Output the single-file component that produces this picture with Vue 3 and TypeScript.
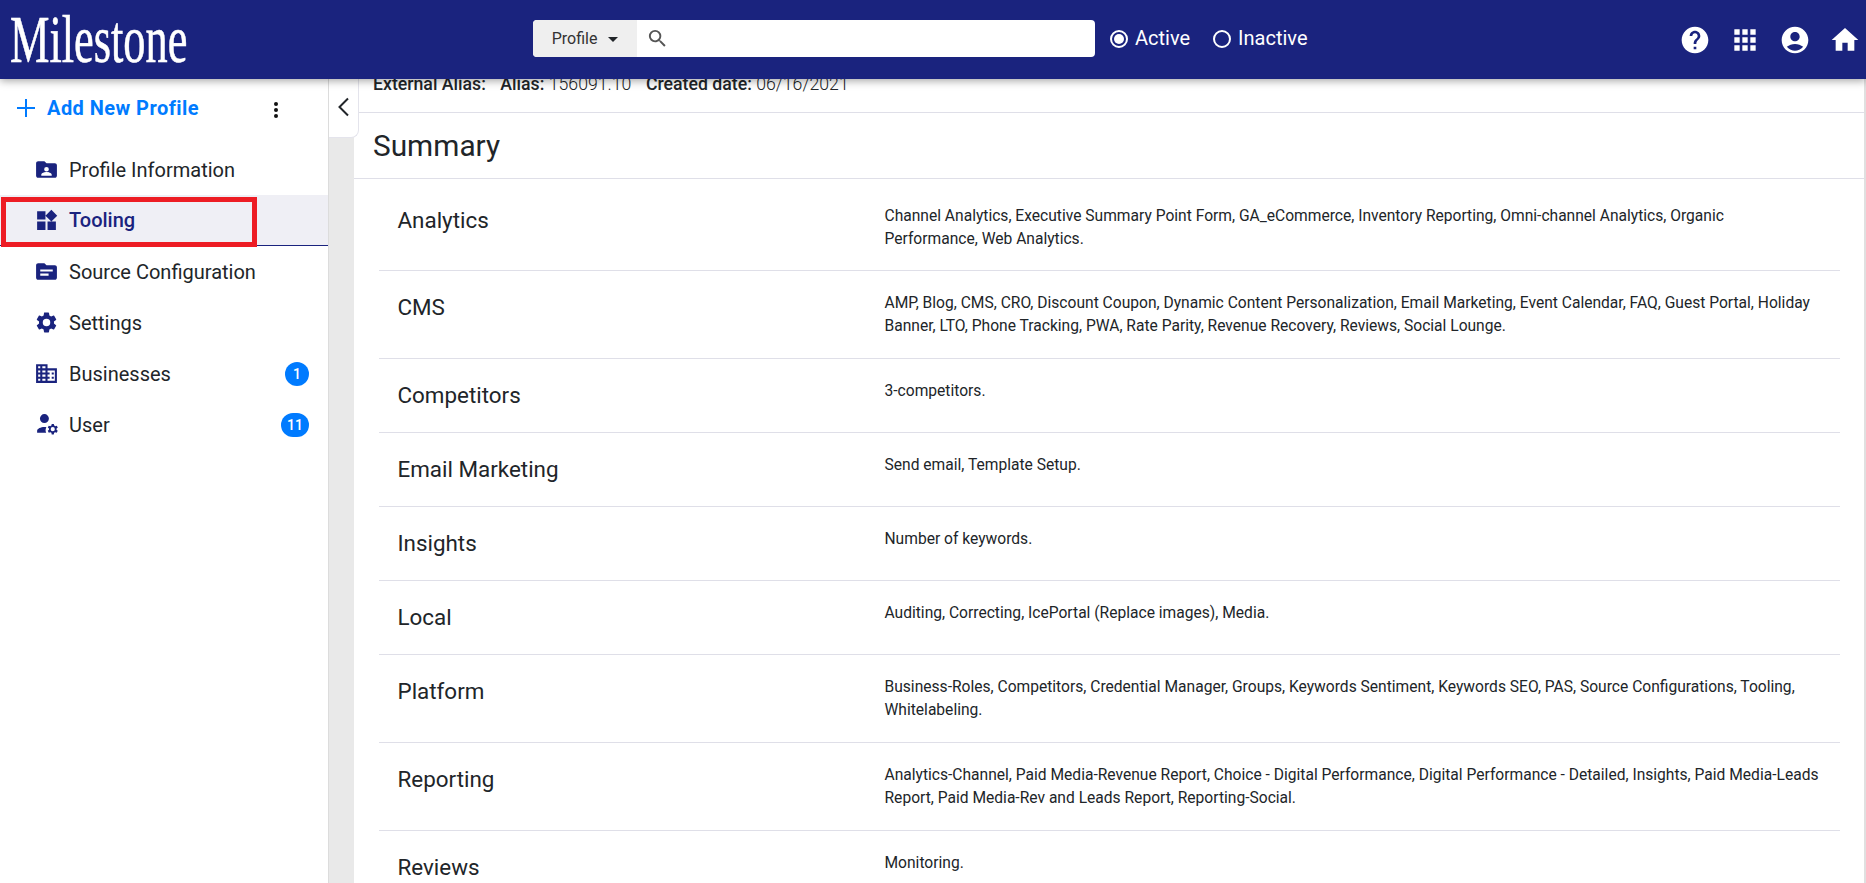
<template>
  <div class="page">
    <header class="topbar">
      <div class="logo">Milestone</div>
      <div class="search-area">
        <div class="search">
          <button class="search-type">Profile <span class="caret"></span></button>
          <svg class="search-icon" viewBox="0 0 24 24"><path d="M15.5 14h-.79l-.28-.27A6.47 6.47 0 0 0 16 9.5 6.5 6.5 0 1 0 9.5 16c1.61 0 3.09-.59 4.23-1.57l.27.28v.79l5 4.99L20.49 19l-4.99-5zm-6 0C7.01 14 5 11.99 5 9.5S7.01 5 9.5 5 14 7.01 14 9.5 11.99 14 9.5 14z"/></svg>
        </div>
        <label class="radio"><span class="radio-dot on"></span>Active</label>
        <label class="radio"><span class="radio-dot"></span>Inactive</label>
      </div>
      <div class="top-icons">
        <svg viewBox="0 0 24 24"><path d="M12 2C6.48 2 2 6.48 2 12s4.48 10 10 10 10-4.48 10-10S17.52 2 12 2zm1 17h-2v-2h2v2zm2.07-7.75l-.9.92C13.45 12.9 13 13.5 13 15h-2v-.5c0-1.1.45-2.1 1.17-2.83l1.24-1.26c.37-.36.59-.86.59-1.41 0-1.1-.9-2-2-2s-2 .9-2 2H8c0-2.21 1.79-4 4-4s4 1.79 4 4c0 .88-.36 1.68-.93 2.25z"/></svg>
        <svg viewBox="0 0 24 24"><path d="M4 8h4V4H4v4zm6 12h4v-4h-4v4zm-6 0h4v-4H4v4zm0-6h4v-4H4v4zm6 0h4v-4h-4v4zm6-10v4h4V4h-4zm-6 4h4V4h-4v4zm6 6h4v-4h-4v4zm0 6h4v-4h-4v4z"/></svg>
        <svg viewBox="0 0 24 24"><path d="M12 2C6.48 2 2 6.48 2 12s4.48 10 10 10 10-4.48 10-10S17.52 2 12 2zm0 4c1.93 0 3.5 1.57 3.5 3.5S13.93 13 12 13s-3.5-1.57-3.5-3.5S10.07 6 12 6zm0 14c-2.03 0-4.43-.82-6.14-2.88C7.55 15.8 9.68 15 12 15s4.45.8 6.14 2.12C16.43 19.18 14.03 20 12 20z"/></svg>
        <svg viewBox="0 0 24 24"><path d="M10 20v-6h4v6h5v-8h3L12 3 2 12h3v8z"/></svg>
      </div>
    </header>

    <div class="body">
      <aside class="sidebar">
        <div class="add-row">
          <svg class="add-plus" viewBox="0 0 18 18"><path d="M9 0v18M0 9h18" stroke="#007bff" stroke-width="2" /></svg>
          <span class="add-label">Add New Profile</span>
          <span class="kebab"><i></i><i></i><i></i></span>
        </div>
        <nav class="nav">
          <a v-for="item in navItems" :key="item.label" class="nav-item" :class="{ active: item.active }">
            <svg class="nav-icon" viewBox="0 0 24 24"><path :d="item.icon" /></svg>
            <span class="nav-label">{{ item.label }}</span>
            <span v-if="item.badge" class="badge">{{ item.badge }}</span>
          </a>
        </nav>
        <div class="highlight"></div>
      </aside>

      <div class="gutter">
        <button class="collapse">
          <svg viewBox="0 0 24 24"><path d="M16 3.5 7.5 12l8.5 8.5" fill="none" stroke="#212529" stroke-width="2" /></svg>
        </button>
      </div>

      <main class="content">
        <div class="meta">
          <b>External Alias:</b><b class="gap">Alias:</b> 156091.10<b class="gap">Created date:</b> 06/16/2021
        </div>
        <h2 class="title">Summary</h2>
        <div class="rows">
          <div v-for="row in rows" :key="row.name" class="row">
            <div class="row-name">{{ row.name }}</div>
            <div class="row-text">{{ row.text }}</div>
          </div>
        </div>
      </main>
    </div>
  </div>
</template>

<script setup lang="ts">
const navItems = [
  { label: "Profile Information", icon: "M20 6h-8l-2-2H4c-1.1 0-2 .9-2 2v12c0 1.1.9 2 2 2h16c1.1 0 2-.9 2-2V8c0-1.1-.9-2-2-2zm-8 3.5a2.25 2.25 0 1 1 0 4.5 2.25 2.25 0 0 1 0-4.5zM17 18H7v-1c0-1.67 3.33-2.5 5-2.5s5 .83 5 2.5v1z" },
  { label: "Tooling", active: true, icon: "M3 3h8v8H3V3zm0 10h8v8H3v-8zm10 0h8v8h-8v-8zM16.66 1.7 22.3 7.34l-5.64 5.66L11 7.34 16.66 1.7z" },
  { label: "Source Configuration", icon: "M20 6h-8l-2-2H4c-1.1 0-2 .9-2 2v12c0 1.1.9 2 2 2h16c1.1 0 2-.9 2-2V8c0-1.1-.9-2-2-2zM6 10h12v2H6v-2zm0 4h8v2H6v-2z" },
  { label: "Settings", icon: "M19.14 12.94c.04-.3.06-.61.06-.94 0-.32-.02-.64-.07-.94l2.03-1.58a.49.49 0 0 0 .12-.61l-1.92-3.32a.488.488 0 0 0-.59-.22l-2.39.96c-.5-.38-1.03-.7-1.62-.94l-.36-2.54a.484.484 0 0 0-.48-.41h-3.84c-.24 0-.43.17-.47.41l-.36 2.54c-.59.24-1.13.57-1.62.94l-2.39-.96c-.22-.08-.47 0-.59.22L2.74 8.87c-.12.21-.08.47.12.61l2.03 1.58c-.05.3-.09.63-.09.94s.02.64.07.94l-2.03 1.58a.49.49 0 0 0-.12.61l1.92 3.32c.12.22.37.29.59.22l2.39-.96c.5.38 1.03.7 1.62.94l.36 2.54c.05.24.24.41.48.41h3.84c.24 0 .44-.17.47-.41l.36-2.54c.59-.24 1.13-.56 1.62-.94l2.39.96c.22.08.47 0 .59-.22l1.92-3.32c.12-.22.07-.47-.12-.61l-2.01-1.58zM12 15.6A3.6 3.6 0 1 1 12 8.4a3.6 3.6 0 0 1 0 7.2z" },
  { label: "Businesses", badge: "1", icon: "M2 3h11v4h9v14H2V3zm2 2v2h2V5H4zm4 0v2h3V5H8zM4 9v2h2V9H4zm4 0v2h3V9H8zM4 13v2h2v-2H4zm4 0v2h3v-2H8zM4 17v2h2v-2H4zm4 0v2h3v-2H8zm5-8v2h2v2h-2v2h2v2h-2v2h7V9h-7zm4 2h2v2h-2v-2zm0 4h2v2h-2v-2z" },
  { label: "User", badge: "11", icon: "M10 2a4.3 4.3 0 1 1 0 8.6A4.3 4.3 0 0 1 10 2zM3 20v-2c0-2 3.5-3.6 7-3.6.7 0 1.3.06 1.9.16-.5.9-.8 2-.8 3 0 .9.2 1.7.6 2.44H3zm18.7-3.5c0-.2 0-.4-.05-.6l1.2-1-1-1.75-1.5.5c-.3-.25-.65-.45-1-.6L19 11.5h-2l-.3 1.55c-.4.15-.7.35-1 .6l-1.5-.5-1 1.75 1.2 1c-.05.4-.05.8 0 1.2l-1.2 1 1 1.75 1.5-.5c.3.25.65.45 1 .6l.3 1.55h2l.3-1.55c.4-.15.7-.35 1-.6l1.5.5 1-1.75-1.2-1c.05-.2.05-.4.05-.6zm-3.7 2a2 2 0 1 1 0-4 2 2 0 0 1 0 4z" },
];

const rows = [
  { name: "Analytics", text: "Channel Analytics, Executive Summary Point Form, GA_eCommerce, Inventory Reporting, Omni-channel Analytics, Organic Performance, Web Analytics." },
  { name: "CMS", text: "AMP, Blog, CMS, CRO, Discount Coupon, Dynamic Content Personalization, Email Marketing, Event Calendar, FAQ, Guest Portal, Holiday Banner, LTO, Phone Tracking, PWA, Rate Parity, Revenue Recovery, Reviews, Social Lounge." },
  { name: "Competitors", text: "3-competitors." },
  { name: "Email Marketing", text: "Send email, Template Setup." },
  { name: "Insights", text: "Number of keywords." },
  { name: "Local", text: "Auditing, Correcting, IcePortal (Replace images), Media." },
  { name: "Platform", text: "Business-Roles, Competitors, Credential Manager, Groups, Keywords Sentiment, Keywords SEO, PAS, Source Configurations, Tooling, Whitelabeling." },
  { name: "Reporting", text: "Analytics-Channel, Paid Media-Revenue Report, Choice - Digital Performance, Digital Performance - Detailed, Insights, Paid Media-Leads Report, Paid Media-Rev and Leads Report, Reporting-Social." },
  { name: "Reviews", text: "Monitoring." },
];
</script>

<style>
html, body {
  margin: 0;
  overflow: hidden;
  background: #fff;
}
</style>

<style scoped>
.page {
  height: 883px;
  overflow: hidden;
  display: flex;
  flex-direction: column;
  font-family: Roboto, "Liberation Sans", sans-serif;
  color: #212529;
}

.topbar {
  position: relative;
  z-index: 2;
  flex: 0 0 79px;
  display: flex;
  align-items: center;
  background: #1a237e;
  box-shadow: 0 2px 8px rgba(0, 0, 0, 0.35);
}

.logo {
  width: 533px;
  flex: none;
  padding-left: 10px;
  box-sizing: border-box;
  font-family: "Liberation Serif", serif;
  font-size: 68px;
  line-height: 79px;
  color: #fff;
  white-space: nowrap;
  -webkit-text-stroke: 0.6px #fff;
  transform: scaleX(0.652);
  transform-origin: 10px 50%;
}

.search-area {
  display: flex;
  align-items: center;
  padding-bottom: 2px;
}

.search {
  width: 562px;
  height: 37px;
  display: flex;
  align-items: center;
  background: #fff;
  border-radius: 4px;
  overflow: hidden;
}

.search-type {
  width: 104px;
  height: 100%;
  border: 0;
  background: #efefef;
  color: #333;
  font: 16px Roboto, sans-serif;
  padding: 0;
}

.caret {
  display: inline-block;
  margin-left: 7px;
  vertical-align: 2px;
  border-top: 5px solid #212529;
  border-left: 5.5px solid transparent;
  border-right: 5.5px solid transparent;
}

.search-icon {
  width: 23px;
  height: 23px;
  margin-left: 9px;
  fill: #555;
}

.radio {
  display: flex;
  align-items: center;
  margin-left: 15px;
  color: #fff;
  font-size: 20px;
  font-weight: 400;
  line-height: 24px;
  margin-top: -2px;
}

.radio + .radio {
  margin-left: 23px;
}

.radio-dot {
  box-sizing: border-box;
  width: 18px;
  height: 18px;
  margin-right: 7px;
  margin-top: 2px;
  border: 2px solid #fff;
  border-radius: 50%;
  position: relative;
}

.radio-dot.on::after {
  content: "";
  position: absolute;
  inset: 2px;
  background: #fff;
  border-radius: 50%;
}

.top-icons {
  margin-left: auto;
  margin-right: 5px;
  display: flex;
  gap: 18px;
}

.top-icons svg {
  width: 32px;
  height: 32px;
  fill: #fff;
}

.body {
  flex: 1;
  display: flex;
  min-height: 0;
}

.sidebar {
  position: relative;
  flex: 0 0 329px;
  box-sizing: border-box;
  border-right: 1px solid #dcdcdc;
}

.add-row {
  display: flex;
  align-items: center;
  height: 58px;
  padding-left: 17px;
  color: #007bff;
  font-weight: 700;
  font-size: 20px;
  letter-spacing: 0.45px;
}

.add-plus {
  width: 18px;
  height: 18px;
  margin-right: 12px;
}

.kebab {
  margin-left: 75px;
  display: flex;
  flex-direction: column;
  gap: 2px;
  margin-top: 4px;
}

.kebab i {
  width: 4px;
  height: 4px;
  background: #111;
  border-radius: 50%;
}

.nav {
  margin-top: 7px;
}

.nav-item {
  display: flex;
  align-items: center;
  height: 51px;
  padding: 0 19px 0 34px;
  font-size: 20px;
  box-sizing: border-box;
}

.nav-item.active {
  background: #efeff5;
  border-bottom: 1px solid #1a237e;
  color: #1a237e;
  font-weight: 500;
}

.nav-icon {
  width: 25px;
  height: 25px;
  margin-right: 10px;
  fill: #1a237e;
}

.nav-label {
  flex: 1;
}

.badge {
  min-width: 24px;
  height: 24px;
  padding: 0 6px;
  box-sizing: border-box;
  background: #007bff;
  border-radius: 12px;
  color: #fff;
  font-size: 14px;
  font-weight: 500;
  line-height: 24px;
  text-align: center;
}

.highlight {
  position: absolute;
  left: 1px;
  top: 118px;
  width: 256px;
  height: 50px;
  box-sizing: border-box;
  border: 5px solid #ed1c24;
}

.gutter {
  position: relative;
  flex: 0 0 25px;
  background: #e9e9e9;
}

.collapse {
  position: absolute;
  left: 0;
  top: 0;
  width: 30px;
  height: 59px;
  padding: 0;
  background: #fff;
  border: 1px solid #e4e4ec;
  border-width: 0 1px 1px 0;
  border-radius: 0 0 8px 0;
}

.collapse svg {
  width: 24px;
  height: 24px;
  margin-top: -3px;
  display: block;
  margin-left: 3px;
}

.content {
  flex: 1;
  min-width: 0;
  background: #fff;
  border-right: 2px solid #e0e0e0;
}

.meta {
  height: 41px;
  margin-top: -7px;
  padding-left: 19px;
  box-sizing: border-box;
  border-bottom: 1px solid #dfdfe8;
  font-size: 17.7px;
  line-height: 24px;
  font-weight: 300;
}

.meta b {
  font-weight: 500;
}

.meta .gap {
  margin-left: 14.5px;
}

.title {
  margin: 0;
  height: 66px;
  padding-left: 19px;
  box-sizing: border-box;
  border-bottom: 1px solid #dfdfe8;
  font-size: 29.8px;
  font-weight: 400;
  line-height: 66px;
}

.rows {
  padding: 0 24px 0 25px;
}

.row {
  display: flex;
  padding: 21px 19px 20px 0;
  border-bottom: 1px solid #dfdfe8;
  min-height: 74px;
  box-sizing: border-box;
}

.row:first-child {
  padding-top: 26px;
  padding-bottom: 19px;
}

.row-name {
  flex: 0 0 505.5px;
  padding-left: 18.5px;
  margin-top: 2px;
  box-sizing: border-box;
  font-size: 22.4px;
  line-height: 26px;
}

.row-text {
  flex: 1;
  font-size: 15.6px;
  line-height: 23px;
}
</style>
